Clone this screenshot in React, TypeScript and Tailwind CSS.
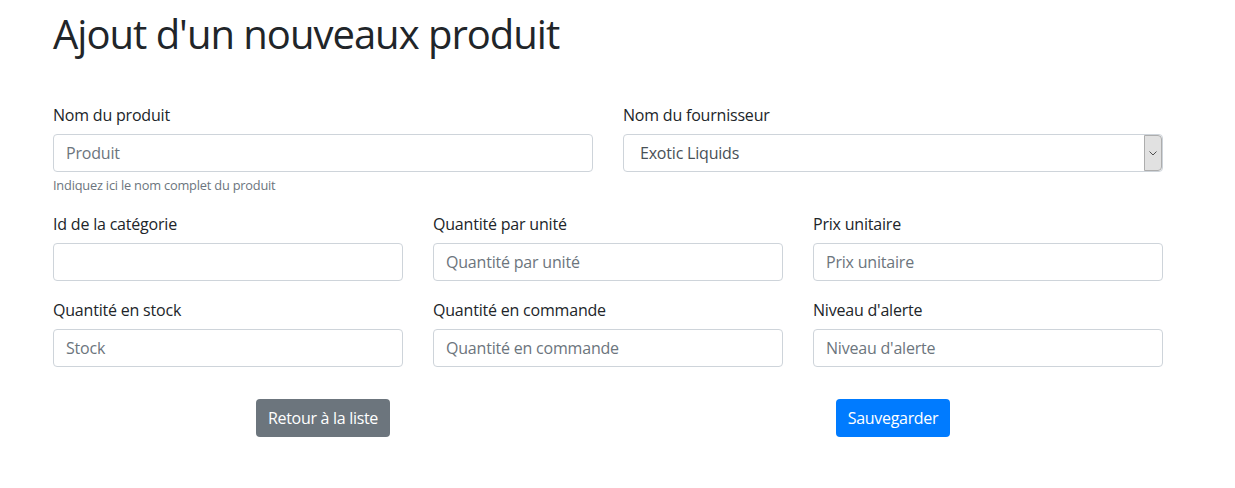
import React from 'react';

const font = { fontFamily: '"Open Sans", "Noto Sans", Arial, sans-serif' };

function Field({ label, placeholder, help }: { label: string; placeholder?: string; help?: string }) {
  return (
    <div className="mb-4">
      <label className="block mb-2 text-[16px] leading-6 text-[#212529] tracking-[-0.2px] translate-y-px">{label}</label>
      <input
        placeholder={placeholder}
        className="block w-full h-[38px] px-3 text-[16px] text-[#495057] bg-white border border-[#ced4da] rounded placeholder:text-[#6c757d] outline-none tracking-[-0.2px]"
      />
      {help && <small className="block mt-1 text-[12.8px] leading-[19.2px] text-[#6c757d] tracking-[-0.2px]">{help}</small>}
    </div>
  );
}

export default function App() {
  return (
    <div className="bg-white min-h-screen text-[#212529]" style={font}>
      <div className="pl-[53px] w-[1163px]">
        <h1 className="pt-[10px] text-[40px] leading-[48px] font-normal mb-[44px] tracking-[-1px]">Ajout d'un nouveaux produit</h1>

        <div className="grid grid-cols-2 gap-x-[30px]">
          <Field label="Nom du produit" placeholder="Produit" help="Indiquez ici le nom complet du produit" />
          <div className="mb-4">
            <label className="block mb-2 text-[16px] leading-6 tracking-[-0.2px] translate-y-px">Nom du fournisseur</label>
            <div className="relative h-[38px] border border-[#ced4da] rounded bg-white">
              <div className="h-full flex items-center pl-[16px] text-[16px] text-[#495057] tracking-[-0.2px]">Exotic Liquids</div>
              <div className="absolute right-0 top-0 h-[36px] w-[18px] bg-[#e1e1e1] border border-[#adadad] flex items-center justify-center rounded-r">
                <svg width="8" height="5" viewBox="0 0 8 5">
                  <path d="M0.5 0.5 L4 4 L7.5 0.5" fill="none" stroke="#505050" strokeWidth="1" />
                </svg>
              </div>
            </div>
          </div>
        </div>

        <div className="grid grid-cols-3 gap-x-[30px]">
          <Field label="Id de la catégorie" />
          <Field label="Quantité par unité" placeholder="Quantité par unité" />
          <Field label="Prix unitaire" placeholder="Prix unitaire" />
          <Field label="Quantité en stock" placeholder="Stock" />
          <Field label="Quantité en commande" placeholder="Quantité en commande" />
          <Field label="Niveau d'alerte" placeholder="Niveau d'alerte" />
        </div>

        <div className="grid grid-cols-2 gap-x-[30px] mt-4">
          <div className="flex justify-center">
            <button className="h-[38px] px-3 rounded bg-[#6c757d] text-white text-[16px] tracking-[-0.3px]">Retour à la liste</button>
          </div>
          <div className="flex justify-center">
            <button className="h-[38px] px-3 rounded bg-[#007bff] text-white text-[16px] tracking-[-0.3px]">Sauvegarder</button>
          </div>
        </div>
      </div>
    </div>
  );
}
